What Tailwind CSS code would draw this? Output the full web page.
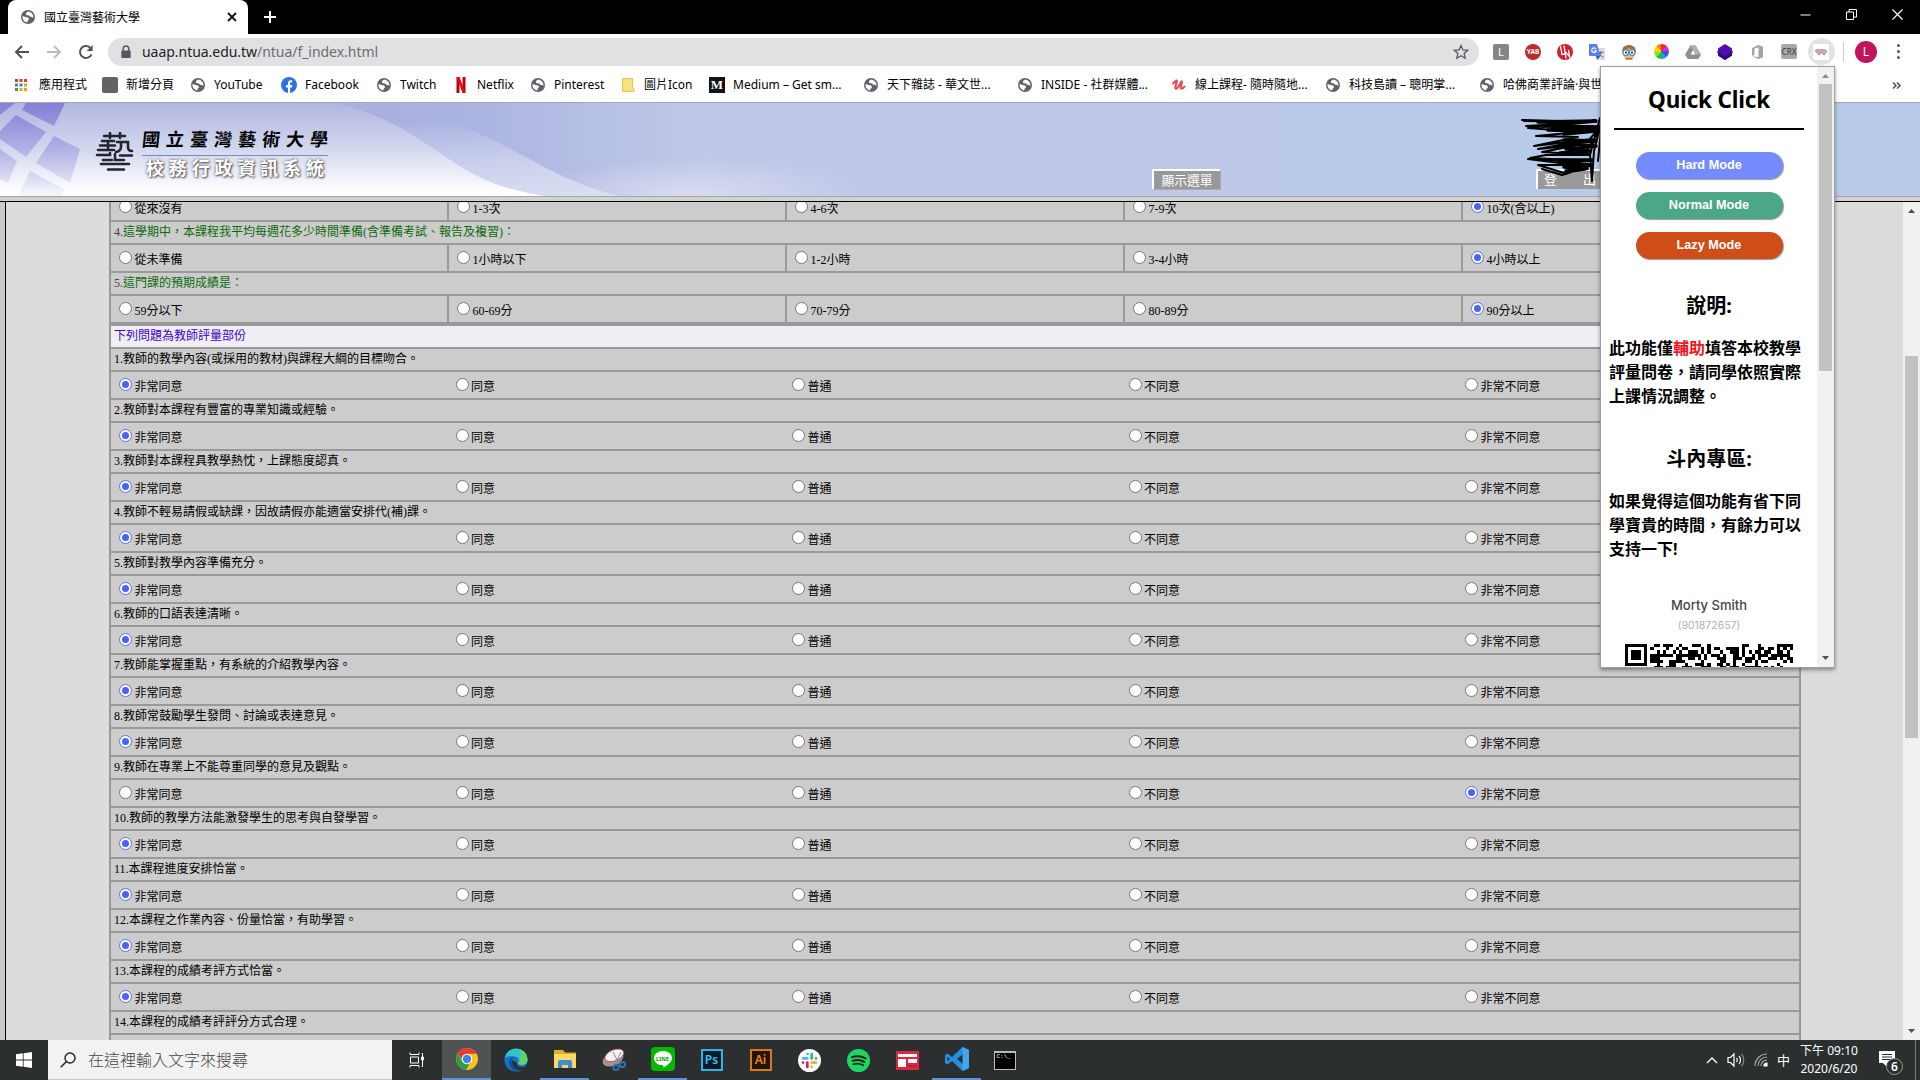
<!DOCTYPE html>
<html lang="zh-Hant">
<head>
<meta charset="utf-8">
<title>國立臺灣藝術大學</title>
<script src="https://cdn.jsdelivr.net/npm/@tailwindcss/browser@4"></script>
</head>
<body class="w-[1920px] h-[1080px] overflow-hidden bg-white font-['Noto_Sans','Noto_Sans_CJK_TC',sans-serif] text-black">
<svg class="hidden">
  <symbol id="globe" viewBox="0 0 16 16"><circle cx="8" cy="8" r="7" fill="#5f6368"/><path d="M8.200 2.400 6 4 6.200 6 9 6.600 10.200 7.800 12.400 8 13.300 9.200A5.600 5.600 0 0 0 8.200 2.400ZM2.500 7 5.600 8 8 8.400 9.200 10 7.800 11.600 7.200 13.500A5.600 5.600 0 0 1 2.500 7Z" fill="#fff"/></symbol>
</svg>
<div class="flex flex-col w-full h-full relative">

  <!-- tab strip -->
  <div class="h-[34px] shrink-0 bg-black flex items-stretch">
    <div class="w-[240px] ml-2 bg-white rounded-t-lg flex items-center pl-3 pr-[10px]">
      <svg class="size-4"><use href="#globe"/></svg>
      <span class="ml-2 mt-px text-[12px] leading-4 flex-1 whitespace-nowrap">國立臺灣藝術大學</span>
      <svg class="size-3" viewBox="0 0 12 12"><path d="M2 2l8 8M10 2l-8 8" stroke="#111" stroke-width="1.800"/></svg>
    </div>
    <svg class="size-4 ml-[14px] mt-[9px]" viewBox="0 0 16 16"><path d="M8 2v12M2 8h12" stroke="#fff" stroke-width="2"/></svg>
    <div class="ml-auto flex items-center gap-[35px] mr-[17px] -mt-[5px]">
      <svg class="size-[11px]" viewBox="0 0 11 11"><path d="M0.500 6h10" stroke="#fff"/></svg>
      <svg class="size-[11px]" viewBox="0 0 11 11"><path d="M.5 3h7v7.500h-7zM3 3V.5h7.500V8H8" fill="none" stroke="#fff"/></svg>
      <svg class="size-[11px]" viewBox="0 0 11 11"><path d="M.5.5l10 10M10.500.5l-10 10" stroke="#fff" stroke-width="1.200"/></svg>
    </div>
  </div>

  <!-- toolbar -->
  <div class="h-[35px] shrink-0 bg-white flex items-center">
    <svg class="size-5 ml-3" viewBox="0 0 20 20"><path d="M17 10H4M10 4l-6 6 6 6" fill="none" stroke="#4f5357" stroke-width="1.900"/></svg>
    <svg class="size-5 ml-3" viewBox="0 0 20 20"><path d="M3 10h13M10 4l6 6-6 6" fill="none" stroke="#b9bbbe" stroke-width="1.900"/></svg>
    <svg class="size-5 ml-3" viewBox="0 0 20 20"><path d="M15.500 12.300a6 6 0 1 1-1.300-6.600" fill="none" stroke="#4f5357" stroke-width="2"/><path d="M16.600 3v6h-6z" fill="#4f5357"/></svg>
    <div class="ml-[12px] w-[1371px] h-7 rounded-full bg-[#e1e1e3] flex items-center">
      <svg class="ml-3 w-[12px] h-[14px]" viewBox="0 0 12 14"><path d="M3.200 6V3.800a2.800 2.800 0 0 1 5.600 0V6" fill="none" stroke="#55585c" stroke-width="1.500"/><rect x="1.300" y="5.500" width="9.400" height="7.500" rx="1" fill="#55585c"/></svg>
      <span class="ml-[10px] text-[14px] leading-5 text-[#222] tracking-[-0.040px] font-['Noto_Sans',sans-serif]">uaap.ntua.edu.tw<span class="text-[#6b6e72]">/ntua/f_index.html</span></span>
      <svg class="ml-auto mr-[10px] size-4" viewBox="0 0 16 16"><path d="M8 1.500l1.900 4.400 4.800.4-3.600 3.200 1.100 4.700L8 11.700l-4.200 2.500 1.100-4.700L1.300 6.300l4.800-.4z" fill="none" stroke="#55585c" stroke-width="1.300"/></svg>
    </div>
    <div class="flex items-center ml-[6px]">
      <div class="w-8 flex justify-center"><span class="size-4 rounded-[2px] bg-[#858585] text-white text-[11px] leading-4 text-center">L</span></div>
      <div class="w-8 flex justify-center"><span class="size-4 rounded-full bg-[#bd2b2b] text-white text-[6.500px] font-bold leading-4 text-center">YAB</span></div>
      <div class="w-8 flex justify-center"><svg class="size-4" viewBox="0 0 16 16"><circle cx="8" cy="8" r="8" fill="#cf1f2e"/><path d="M3.500 2l1.500 8.500 3.500-.6M9 14.500L7.800 7.200l4.800 5.600-1.100-7M7 1.500l.8 5" fill="none" stroke="#fff" stroke-width="1.300"/></svg></div>
      <div class="w-8 flex justify-center"><svg class="size-4" viewBox="0 0 16 16"><path d="M6 4h10v12H9z" fill="#d8dadd"/><path d="M9.500 8.500h5M12 7v1.500c0 2-1.200 3.500-2.500 4.500M10.500 9c.7 2 2 3.500 4 4.200" stroke="#66707c" fill="none"/><path d="M0 0h8l3.500 12H1a1 1 0 0 1-1-1z" fill="#5b7df0"/><path d="M11.500 12 8 16l-1-4z" fill="#3454c0"/><path d="M7 5A2.300 2.300 0 1 0 7.300 6.800H5" fill="none" stroke="#fff" stroke-width="1.200"/></svg></div>
      <div class="w-8 flex justify-center"><svg class="size-4" viewBox="0 0 16 16"><circle cx="8" cy="9" r="6.500" fill="#e9b987"/><path d="M1 8C1 3 4 1 8 1s7 2 7 7l-4-2.500L8 4.500 5 5.500z" fill="#9a7440"/><circle cx="4.800" cy="8.500" r="2.800" fill="#fff" stroke="#4a86c5" stroke-width="1.200"/><circle cx="11.200" cy="8.500" r="2.800" fill="#fff" stroke="#4a86c5" stroke-width="1.200"/><circle cx="5" cy="8.500" r=".9"/><circle cx="11" cy="8.500" r=".9"/><path d="M4.500 14h7v1.500h-7z" fill="#a8692c"/></svg></div>
      <div class="w-8 flex justify-center"><span class="size-[15px] rounded-full bg-[conic-gradient(#f2203a_0_12%,#d62be0_12%_25%,#4050f0_25%_38%,#17a3e8_38%_50%,#12c53c_50%_62%,#8be01c_62%_75%,#ffd60a_75%_88%,#ff7a10_88%)]"></span></div>
      <div class="w-8 flex justify-center"><svg class="size-4" viewBox="0 0 16 16"><path d="M5.500 1.500h5L16 10.500 13.300 15H2.700L0 10.500z" fill="#8f8f8f"/><path d="M10.500 1.500 16 10.500h-5L5.500 1.500z" fill="#b3b3b3"/><path d="M8 6l2.500 4.500h-5z" fill="#fff"/></svg></div>
      <div class="w-8 flex justify-center"><svg class="size-4" viewBox="0 0 16 16"><path d="M8 0l7 4.500v2L16 8l-1 1.500v2L8 16l-7-4.500v-2L0 8l1-1.500v-2z" fill="#4f0cb0"/><path d="M1 8.500l7 3.500 7-3.500v3L8 16l-7-4.500z" fill="#35067c"/></svg></div>
      <div class="w-8 flex justify-center"><svg class="size-4" viewBox="0 0 16 16"><path d="M3 4l6.500-3L14 2.400v11.200L9.500 15 3 12.500l6.500.6V3.400L5.500 4.600v6.200L3 12z" fill="#a5a5a5"/></svg></div>
      <div class="w-8 flex justify-center"><span class="w-4 h-[15px] rounded-[2px] bg-[#a9a9a9] text-[#333] text-[8px] leading-[15px] flex justify-center">CRX</span></div>
      <div class="w-8 flex justify-center"><span class="size-[27px] shrink-0 rounded-full bg-[#e2e2e2] flex items-center justify-center"><svg class="size-4 bg-white" viewBox="0 0 16 16"><path d="M2 6.500l2-1 7 .2 2 .3 1 1.200-1 1.600-1 .4-.5 1.800h-.8L10 9.200H7L6.500 11h-.8L5 9.200 3.500 8.800z" fill="#cfa9a9" stroke="#9c7878" stroke-width=".6"/></svg></span></div>
      <span class="w-px h-5 bg-[#ccc] ml-[6px]"></span>
      <span class="ml-[11px] size-[22px] rounded-full bg-[#c0145c] text-white text-[12px] leading-[22px] text-center">L</span>
      <span class="ml-[20px] flex flex-col gap-[3px]"><i class="size-[3px] rounded-full bg-[#55585c]"></i><i class="size-[3px] rounded-full bg-[#55585c]"></i><i class="size-[3px] rounded-full bg-[#55585c]"></i></span>
    </div>
  </div>

  <!-- bookmarks -->
  <div class="h-[33px] shrink-0 bg-white flex items-center pl-[13px] pb-px text-[12px] leading-4 whitespace-nowrap">
    <div class="w-[89px] shrink-0 flex items-center gap-[10px]"><svg class="size-4" viewBox="0 0 16 16"><g fill="#d04437"><path d="M2 2h3v3H2zM6.500 2h3v3h-3zM11 2h3v3h-3z"/></g><path d="M2 6.500h3v3H2z" fill="#3c9a50"/><path d="M6.500 6.500h3v3h-3z" fill="#3f78e0"/><path d="M11 6.500h3v3h-3zM6.500 11h3v3h-3zM11 11h3v3h-3z" fill="#e0a81c"/><path d="M2 11h3v3H2z" fill="#3c9a50"/></svg>應用程式</div>
    <div class="w-[88px] shrink-0 flex items-center gap-2"><span class="size-4 rounded-[2px] bg-[#636363]"></span>新增分頁</div>
    <div class="w-[91px] shrink-0 flex items-center gap-2"><svg class="size-4"><use href="#globe"/></svg>YouTube</div>
    <div class="w-[95px] shrink-0 flex items-center gap-2"><svg class="size-4" viewBox="0 0 16 16"><circle cx="8" cy="8" r="8" fill="#2f6fe8"/><path d="M7 16v-5.500H5V8h2V6.300C7 4.200 8.200 3.200 10 3.200l1.300.1v2h-1c-1 0-1.200.5-1.200 1.200V8h2.200l-.4 2.500H9.100V16z" fill="#fff"/></svg>Facebook</div>
    <div class="w-[77px] shrink-0 flex items-center gap-2"><svg class="size-4"><use href="#globe"/></svg>Twitch</div>
    <div class="w-[77px] shrink-0 flex items-center gap-2"><svg class="size-4" viewBox="0 0 16 16"><path d="M3.500 0h3v16h-3zM9.500 0h3v16h-3z" fill="#b1060f"/><path d="M3.500 0h3l6 16h-3z" fill="#e50914"/></svg>Netflix</div>
    <div class="w-[90px] shrink-0 flex items-center gap-2"><svg class="size-4"><use href="#globe"/></svg>Pinterest</div>
    <div class="w-[89px] shrink-0 flex items-center gap-2"><svg class="size-4" viewBox="0 0 16 16"><path d="M2.500 1.500h10v9l1.500 1v3H2.500z" fill="#f7e27c" stroke="#dfc65a"/></svg>圖片Icon</div>
    <div class="w-[154px] shrink-0 flex items-center gap-2"><span class="size-4 bg-[#111] text-white font-['Liberation_Serif',serif] font-bold text-[13px] leading-4 text-center">M</span>Medium – Get sm...</div>
    <div class="w-[154px] shrink-0 flex items-center gap-2"><svg class="size-4"><use href="#globe"/></svg>天下雜誌 - 華文世...</div>
    <div class="w-[154px] shrink-0 flex items-center gap-2"><svg class="size-4"><use href="#globe"/></svg>INSIDE - 社群媒體...</div>
    <div class="w-[154px] shrink-0 flex items-center gap-2"><svg class="size-4" viewBox="0 0 16 16"><path d="M1.500 7C3 6 4 4 5.500 3.500 7 4 3.500 9.500 4.500 11.500 6 13 9 7 10.500 4.500 12 4 9 10 10 11.500c1.500.5 3-1 4-2.500" fill="none" stroke="#e2525a" stroke-width="2.200"/></svg>線上課程- 隨時隨地...</div>
    <div class="w-[154px] shrink-0 flex items-center gap-2"><svg class="size-4"><use href="#globe"/></svg>科技島讀 – 聰明掌...</div>
    <div class="w-[413px] shrink-0 flex items-center gap-2"><svg class="size-4"><use href="#globe"/></svg>哈佛商業評論·與世</div>
    <svg class="size-[9px] shrink-0" viewBox="0 0 9 9"><path d="M1 1.500l3 3-3 3M5 1.500l3 3-3 3" fill="none" stroke="#444" stroke-width="1.400"/></svg>
  </div>

  <!-- banner -->
  <header class="relative h-[94px] shrink-0 border-t border-[#a5a9b5] bg-[#bfc8e8] overflow-hidden">
    <svg class="absolute inset-0 w-full h-[93px]" viewBox="0 0 1920 93" preserveAspectRatio="none">
      <defs>
        <linearGradient id="sky" x1="0" y1="0" x2="0" y2="1"><stop offset="0" stop-color="#b0b6e0"/><stop offset=".5" stop-color="#d3d8ef"/><stop offset=".95" stop-color="#fff"/></linearGradient>
        <linearGradient id="wave" x1="0" x2="1"><stop offset="0" stop-color="#a9afe0"/><stop offset=".35" stop-color="#abb3e1"/><stop offset="1" stop-color="#bfc8e8"/></linearGradient>
        <radialGradient id="glow"><stop offset="0" stop-color="#d9dcf1"/><stop offset="1" stop-color="#d9dcf1" stop-opacity="0"/></radialGradient>
        <linearGradient id="fade" x1="0" y1="0" x2="0" y2="1"><stop offset="0" stop-color="#8580d6"/><stop offset="1" stop-color="#a9a4e6" stop-opacity=".1"/></linearGradient>
        <linearGradient id="mist" x1="0" y1="0" x2="0" y2="1"><stop offset=".2" stop-color="#fff" stop-opacity="0"/><stop offset="1" stop-color="#e4e8f6" stop-opacity=".75"/></linearGradient>
      </defs>
      <rect width="640" height="93" fill="url(#sky)"/>
      <path d="M335 0C385 12 410 30 440 50S490 84 545 93H700V0z" fill="url(#wave)"/>
      <path d="M335 0C385 12 410 30 440 50S490 84 545 93H620C520 70 500 10 340 0z" fill="url(#mist)"/>
      <ellipse cx="690" cy="93" rx="170" ry="38" fill="url(#glow)"/>
      <rect x="1279" width="641" height="93" fill="#b9cbea"/>
      <g fill="url(#fade)"><path d="M0 0H15L0 12zM26 0H65L54 23 22 7zM16 12L46 29 26 54 0 36V28zM54 33L80 46 70 80 36 60zM0 46L17 58 8 80 0 76zM30 68L64 86 62 93H18z"/></g>
    </svg>
    <div class="relative flex pl-[95px] pt-[24px]">
      <svg class="w-10 h-10 mt-[5px]" viewBox="0 0 40 40" fill="none" stroke="#22262f" stroke-width="2.600" stroke-linecap="round"><path d="M9 4h21M15 1v5M25 1v5M7 9h12M13 9v9M5 13.500h15M3 18h16M22 10h11v5q0 4 4 4M26 10v5q0 4-5 5M2 23h13v-2M8 28h9M20 22v6h9M25 23.500h12M6 32h28M13 37.500h16"/></svg>
      <div class="ml-[7px] w-[186px]">
        <div class="flex justify-between text-[18px] leading-[27px] font-bold font-['Liberation_Serif','Noto_Sans_CJK_TC',serif] [&>span]:-skew-x-6"><span>國</span><span>立</span><span>臺</span><span>灣</span><span>藝</span><span>術</span><span>大</span><span>學</span></div>
        <div class="h-px bg-[#6f8cc4] mt-px"></div>
        <div class="flex justify-between px-1 text-[18px] leading-[25px] font-bold text-white [text-shadow:0_0_3px_#555,1px_1px_2px_#555]"><span>校</span><span>務</span><span>行</span><span>政</span><span>資</span><span>訊</span><span>系</span><span>統</span></div>
      </div>
      <button class="ml-[824px] mt-[42px] w-[68px] h-[20px] border-t-2 border-l-2 border-white bg-[#999] text-white text-[12.800px] leading-[17px] whitespace-nowrap shadow-[1px_1px_0_#aaa]">顯示選單</button>
      <button class="ml-[316px] mt-[42px] w-[80px] h-[20px] border-t-2 border-l-2 border-white bg-[#999] text-white text-[13px] leading-[17px] flex gap-[26px] pl-[6px]"><span>登</span><span>出</span></button>
    </div>
    <svg class="absolute left-[1518px] top-[12px] w-[90px] h-[70px]" viewBox="0 0 90 70" fill="none" stroke="#000" stroke-linecap="round" stroke-linejoin="round"><path stroke-width="3.500" d="M20 7L78 6 24 11 83 12 30 15 78 16 46 19M46 25L78 26 42 29 78 31 48 34 72 36 42 38 70 39M38 45L74 45 42 48 74 50 46 52 66 54 48 56"/><path stroke-width="2" d="M4 5L78 7 6 6M8 11L60 8 10 13 62 17 18 21 60 22 16 31 74 24 20 34 60 30 24 37 72 40 28 40 12 43 74 46 10 44 58 50 20 50 46 58 70 54M82 3L72 40 74 66 76 36 84 4 80 46M70 26L86 8 66 40M24 54L44 60 70 52"/></svg>
  </header>

  <!-- questionnaire frame -->
  <div class="h-[6px] shrink-0 bg-[#d0d3d0] border-t border-b border-t-[#a5a5a5] border-b-black"></div>
  <main class="h-[838px] shrink-0 flex bg-[#dcdcdc] overflow-hidden">
    <div class="w-[6px] shrink-0 bg-[#c9c9c9] border-r border-black"></div>
    <div id="survey" class="ml-[103px] -mt-2 w-[1692px] shrink-0 border-x-2 border-[#999] text-[12px] leading-[18px] font-['Liberation_Serif','Noto_Sans_CJK_TC',serif]"></div>
    <div class="ml-auto w-[17px] bg-[#f1f1f1] flex flex-col items-center">
      <svg class="w-[7px] h-[4px] mt-[7px] shrink-0" viewBox="0 0 7 4"><path d="M0 4l3.500-4L7 4z" fill="#505050"/></svg>
      <div class="mt-[143px] w-[13px] h-[382px] shrink-0 bg-[#c1c1c1]"></div>
      <svg class="w-[7px] h-[4px] mt-auto mb-[7px] shrink-0" viewBox="0 0 7 4"><path d="M0 0l3.500 4L7 0z" fill="#505050"/></svg>
    </div>
  </main>

  <!-- taskbar -->
  <footer class="h-10 shrink-0 bg-[#2c2f30] flex items-stretch text-white">
    <div class="w-12 flex items-center justify-center"><svg class="size-4" viewBox="0 0 16 16"><path d="M0 2.200L6.800 1.300v6.300H0zM7.600 1.200L16 0v7.600H7.600zM0 8.400h6.800v6.300L0 13.800zM7.600 8.400H16V16l-8.400-1.200z" fill="#fff"/></svg></div>
    <div class="w-[344px] bg-[#f2f2f2] border-b border-[#c8c8c8] flex items-center pl-3">
      <svg class="size-4" viewBox="0 0 16 16"><circle cx="10" cy="6" r="5" fill="none" stroke="#222" stroke-width="1.400"/><path d="M6.500 9.500L.7 15.300" stroke="#222" stroke-width="1.500"/></svg>
      <span class="ml-[12px] text-[16px] leading-6 text-[#444] font-light">在這裡輸入文字來搜尋</span>
    </div>
    <div class="w-[49px] flex items-center justify-center"><svg class="size-4" viewBox="0 0 16 16" fill="none" stroke="#fff"><path d="M1 .5v2h9v-2M1 15.500v-2h9v2M1.500 5h8v6h-8zM13.500 1v14"/><path d="M12.500 5h2v3h-2z" fill="#fff"/></svg></div>
    <div class="w-[49px] ml-px flex items-center justify-center bg-[#505354] border-b-2 border-[#5f94cf]"><svg class="size-6" viewBox="0 0 24 24"><circle cx="12" cy="12" r="11" fill="#fbc116"/><path d="M2.500 6.500A11 11 0 0 0 11 23l4.700-8.200L12 12 7.400 14.600z" fill="#2b9f47"/><path d="M2.500 6.500A11 11 0 0 1 21.600 6.700H12L8 14z" fill="#e33b2e"/><circle cx="12" cy="12" r="5.300" fill="#fff"/><circle cx="12" cy="12" r="4.200" fill="#4080ee"/></svg></div>
    <div class="w-[49px] flex items-center justify-center"><svg class="size-6" viewBox="0 0 24 24"><circle cx="12" cy="12" r="11.500" fill="#1674c6"/><path d="M.7 10A11.500 11.500 0 0 1 23.500 11c.2 4-2.500 6-6 6-2.500 0-3.700-1-3-2.500 1-1.800.5-5.500-4-6S3 8 .7 10z" fill="#35c1c9"/><path d="M15 1a11.500 11.500 0 0 1 8.500 10c.2 4-2.500 6-6 6-2.500 0-3.700-1-3-2.500C18 9 17 4 15 1z" fill="#5fd36a"/><path d="M8 12c-1 5 3 10 9 10.500 3-1 4.500-3 5.300-4.500-5 2.500-10 .5-9.500-3.500z" fill="#2c3032"/><path d="M8 12c-1 5 3 10 9 10.500-7 2-12-3-12-7.500 0-4 3-6 6-6-2 .5-3 2-3 3z" fill="#0f4f9e"/></svg></div>
    <div class="w-[49px] flex items-center justify-center border-b-2 border-[#5f94cf]"><svg class="w-[22px] h-5" viewBox="0 0 22 20"><path d="M0 1h9l2 2.500h11V19H0z" fill="#e3ac25"/><path d="M0 5h22v14H0z" fill="#fbd868"/><path d="M4 19v-6.500l1.500-1.500h11l1.500 1.500V19h-4v-3H8v3z" fill="#3f8fd0"/></svg></div>
    <div class="w-[49px] flex items-center justify-center"><svg class="size-6" viewBox="0 0 24 24"><ellipse cx="11" cy="11" rx="11" ry="6.500" fill="#a98f8f" transform="rotate(-25 11 11)"/><ellipse cx="12.500" cy="7.500" rx="10" ry="5.500" fill="#f4f1f0" stroke="#b44" stroke-width=".8" transform="rotate(-22 12 8)"/><path d="M11 4l6 12M19 4l-6 12" stroke="#888"/><circle cx="14" cy="19.500" r="2.700" fill="none" stroke="#3276b5" stroke-width="1.800"/><circle cx="20.500" cy="16.500" r="2.500" fill="none" stroke="#3276b5" stroke-width="1.800"/></svg></div>
    <div class="w-[49px] flex items-center justify-center border-b-2 border-[#5f94cf]"><div class="size-6 rounded-[4px] bg-[#00b900] relative flex items-center justify-center"><svg class="absolute inset-0" viewBox="0 0 24 24"><path d="M12 4c5 0 9 3 9 7.200 0 3.500-4 6.500-8.500 9.300l-.3-2.300C7 18.200 3 15.400 3 11.200 3 7 7 4 12 4z" fill="#fff"/></svg><span class="relative text-[5.500px] leading-3 font-bold text-[#00a000]">LINE</span></div></div>
    <div class="w-[49px] flex items-center justify-center"><span class="size-[22px] bg-[#071c28] border-2 border-[#2fb4e4] text-[#3ac3f2] text-[12px] leading-[17px] font-semibold text-center">Ps</span></div>
    <div class="w-[49px] flex items-center justify-center"><span class="size-[22px] bg-[#261300] border-2 border-[#d8791a] text-[#f08a1c] text-[12px] leading-[17px] font-semibold text-center">Ai</span></div>
    <div class="w-[49px] flex items-center justify-center"><svg class="size-[23px]" viewBox="0 0 24 24"><circle cx="12" cy="12" r="12" fill="#fff"/><g stroke-width="2.800" stroke-linecap="round"><path d="M10 5v.1M5.300 9.700h4.500" stroke="#36c5f0"/><path d="M14.300 5.300v4.500M18.800 9.700h.1" stroke="#2eb67d"/><path d="M14.300 14.200h4.500M14.300 18.700v.1" stroke="#ecb22e"/><path d="M9.700 14.200v4.500M5.200 14.200h.1" stroke="#e01e5a"/></g></svg></div>
    <div class="w-[49px] flex items-center justify-center"><svg class="size-[23px]" viewBox="0 0 24 24"><circle cx="12" cy="12" r="12" fill="#1ed760"/><path d="M5 8.500c5-1.500 10-1 14.500 1.300M6 12.300c4-1.200 8.500-.8 12 1.200M6.800 15.800c3.500-1 7-.6 10 1" fill="none" stroke="#16241a" stroke-width="2" stroke-linecap="round"/></svg></div>
    <div class="w-[49px] flex items-center justify-center"><svg class="w-[23px] h-[19px]" viewBox="0 0 23 19"><path d="M0 0h23v19H0z" fill="#dc2740"/><path d="M2 3h19v3H2zM2 8h8v8H2zM12 8h9v4h-9z" fill="#fff"/><path d="M12 14h9v2h-9z" fill="#c01f38"/></svg></div>
    <div class="w-[49px] flex items-center justify-center border-b-2 border-[#5f94cf]"><svg class="size-6" viewBox="0 0 24 24"><path d="M17.500 0L24 3v18l-6.500 3L7 14l-4.500 3.500L0 16V8l2.500-1.500L7 10zM18 7l-6 5 6 5zM2.500 9.500v5L5 12z" fill="#2490dd" fill-rule="evenodd"/><path d="M17.500 0L24 3v18l-6.500 3z" fill="#41a6ee"/></svg></div>
    <div class="w-[49px] -ml-px flex items-center justify-center"><div class="w-[22px] h-[19px] bg-black border border-t-2 border-[#bbb] text-[6px] leading-[8px] pl-[2px] font-['Liberation_Mono',monospace] whitespace-nowrap">C:\_</div></div>
    <div class="ml-auto flex items-center">
      <svg class="w-3 h-2" viewBox="0 0 12 8"><path d="M1 7l5-5 5 5" fill="none" stroke="#fff" stroke-width="1.400"/></svg>
      <svg class="ml-[9px] w-[18px] h-4" viewBox="0 0 18 16" fill="none" stroke="#fff" stroke-width="1.200"><path d="M1 5.500h2.500L7 2v12l-3.500-3.500H1z"/><path d="M9.500 6c1 1 1 3 0 4M12 4c2 2 2 6 0 8"/><path d="M14.500 2c3 3 3 9 0 12" stroke="#888"/></svg>
      <svg class="ml-[9px] w-[14px] h-[14px]" viewBox="0 0 14 14" fill="none" stroke="#aaa" stroke-width="1.200"><path d="M1 13A12 12 0 0 1 13 1M4 13a9 9 0 0 1 9-9M7 13a6 6 0 0 1 6-6" /><path d="M10 13a3 3 0 0 1 3-3v3z" fill="#fff" stroke="#fff"/></svg>
      <span class="ml-[9px] w-[13px] text-[13px] leading-5">中</span>
      <div class="ml-[7px] w-[64px] flex flex-col items-center text-[12px] leading-[18px] whitespace-nowrap"><span>下午 09:10</span><span>2020/6/20</span></div>
      <div class="ml-[18px] relative w-[24px] h-[28px]">
        <svg class="absolute left-0 top-[5px] w-4 h-[17px]" viewBox="0 0 16 17"><path d="M0 0h16v12H8v4l-4-4H0z" fill="#fff"/><path d="M3 3.500h10M3 6h10M3 8.500h10" stroke="#2c2f30"/></svg>
        <span class="absolute left-[7px] top-[12px] size-[17px] rounded-full border border-[#999] bg-[#2c2f30] text-[12px] leading-[15px] text-center font-semibold">6</span>
      </div>
      <span class="ml-3 mr-1 w-px h-10 bg-[#777]"></span>
    </div>
  </footer>

  <!-- extension popup -->
  <aside class="absolute left-[1600px] top-[66px] w-[235px] h-[602px] bg-white border border-[#a0a0a0] shadow-[0_2px_4px_rgba(0,0,0,.4)] flex overflow-hidden">
    <div class="w-[216px] shrink-0 px-2 flex flex-col">
      <h1 class="mt-[14px] text-center text-[22.500px] leading-[38px] font-bold tracking-[-0.200px] font-['Noto_Sans',sans-serif] whitespace-nowrap">Quick Click</h1>
      <div class="mx-[5px] mt-[9px] h-[2px] shrink-0 bg-black"></div>
      <div class="mt-[22px] flex flex-col items-center gap-[13px] text-white text-[12.700px] font-bold font-['Liberation_Sans',sans-serif]">
        <button class="w-[147px] h-[27px] rounded-full bg-[#748cff] shadow-[1px_1px_1px_#999]">Hard Mode</button>
        <button class="w-[147px] h-[27px] rounded-full bg-[#4ba788] shadow-[1px_1px_1px_#999]">Normal Mode</button>
        <button class="w-[147px] h-[27px] rounded-full bg-[#cf4d16] shadow-[1px_1px_1px_#999]">Lazy Mode</button>
      </div>
      <h2 class="mt-[32px] text-center text-[20px] leading-[30px] font-bold">說明:</h2>
      <p class="mt-[15px] text-[16px] leading-6 font-bold whitespace-nowrap">此功能僅<span class="text-[#f5141e]">輔助</span>填答本校教學<br>評量問卷，請同學依照實際<br>上課情況調整。</p>
      <h2 class="mt-[36px] text-center text-[20px] leading-[30px] font-bold">斗內專區:</h2>
      <p class="mt-[15px] text-[16px] leading-6 font-bold whitespace-nowrap">如果覺得這個功能有省下同<br>學寶貴的時間，有餘力可以<br>支持一下!</p>
      <p class="mt-[34px] text-center text-[13px] leading-5 font-medium text-[#444] font-['Inter',sans-serif]">Morty Smith</p>
      <p class="mt-[3px] text-center text-[10.500px] leading-4 text-[#b0b0b6] font-['Inter',sans-serif]">(901872657)</p>
      <svg id="qr" class="mt-[10px] ml-[16px] w-[168px] h-[28.500px] shrink-0" viewBox="0 0 53 9" shape-rendering="crispEdges"></svg>
    </div>
    <div class="w-[17px] shrink-0 bg-[#f1f1f1] flex flex-col items-center">
      <svg class="w-[7px] h-[4px] mt-[7px] shrink-0" viewBox="0 0 7 4"><path d="M0 4l3.500-4L7 4z" fill="#8a8a8a"/></svg>
      <div class="mt-[6px] w-[13px] h-[287px] shrink-0 bg-[#c1c1c1]"></div>
      <svg class="w-[7px] h-[4px] mt-auto mb-[7px] shrink-0" viewBox="0 0 7 4"><path d="M0 0l3.500 4L7 0z" fill="#505050"/></svg>
    </div>
  </aside>
</div>

<script>
const radio = on => on
  ? '<span class="size-[13px] mb-px shrink-0 rounded-full border-[1.500px] border-[#5a70f0] bg-white flex items-center justify-center"><i class="size-[7px] rounded-full bg-[#4a62f5]"></i></span>'
  : '<span class="size-[13px] mb-px shrink-0 rounded-full border border-[#777] bg-white"></span>';
const cell = (text, on, cls) => `<div class="${cls}">${radio(on)}<span class="ml-[2.500px] mt-[3px]">${text}</span></div>`;
const divided = (opts, last) => `<div class="flex h-[26px] box-content ${last ? 'border-b-4' : 'border-b-2'} border-[#999] bg-[#ccc]">` +
  opts.map((t, i) => cell(t, i === 4, i < 4 ? 'w-[338px] shrink-0 pl-2 flex items-center border-r-2 border-[#999]' : 'flex-1 pl-2 flex items-center')).join('') + '</div>';
const plain = pick => '<div class="flex h-[26px] box-content border-b-2 border-[#999] bg-[#ccc]">' +
  ['非常同意', '同意', '普通', '不同意', '非常不同意'].map((t, i) => cell(t, i === pick, 'w-[336.500px] shrink-0 pl-2 flex items-center')).join('') + '</div>';
const line = (text, cls) => `<div class="h-[20px] pt-px box-content border-b-2 border-[#999] pl-[3px] leading-[19px] whitespace-nowrap ${cls}">${text}</div>`;
const green = t => line(t.replace(/^\d\./, m => `<span class="text-[#444]">${m}</span>`), 'bg-[#ccc] text-[#0b6b0b]');

const questions = ['教師的教學內容(或採用的教材)與課程大綱的目標吻合。', '教師對本課程有豐富的專業知識或經驗。', '教師對本課程具教學熱忱，上課態度認真。',
  '教師不輕易請假或缺課，因故請假亦能適當安排代(補)課。', '教師對教學內容準備充分。', '教師的口語表達清晰。', '教師能掌握重點，有系統的介紹教學內容。',
  '教師常鼓勵學生發問、討論或表達意見。', '教師在專業上不能尊重同學的意見及觀點。', '教師的教學方法能激發學生的思考與自發學習。', '本課程進度安排恰當。',
  '本課程之作業內容、份量恰當，有助學習。', '本課程的成績考評方式恰當。', '本課程的成績考評評分方式合理。'];

document.getElementById('survey').innerHTML =
  divided(['從來沒有', '1-3次', '4-6次', '7-9次', '10次(含以上)']) +
  green('4.這學期中，本課程我平均每週花多少時間準備(含準備考試、報告及複習)：') +
  divided(['從未準備', '1小時以下', '1-2小時', '3-4小時', '4小時以上']) +
  green('5.這門課的預期成績是：') +
  divided(['59分以下', '60-69分', '70-79分', '80-89分', '90分以上'], true) +
  line('下列問題為教師評量部份', 'bg-[#edeff2] text-[#4400cc]') +
  questions.map((q, i) => line(`${i + 1}.${q}`, 'bg-[#ccc]') + (i < 13 ? plain(i === 8 ? 4 : 0) : '<div class="h-[26px] bg-[#ccc]"></div>')).join('');

// donation QR code: finder pattern on the left, data modules after it
let path = 'M0 0h7v7h-7zM1 1v5h5v-5zM2 2h3v3h-3z', seed = 11;
for (let y = 0; y < 9; y++) for (let x = 8; x < 53; x++) {
  seed = (seed * 1103515245 + 12345) % 2147483648;
  if ((seed >> 16) % 100 < 52) path += `M${x} ${y}h1v1h-1z`;
}
document.getElementById('qr').innerHTML = `<path fill-rule="evenodd" d="${path}"/>`;
</script>
</body>
</html>
